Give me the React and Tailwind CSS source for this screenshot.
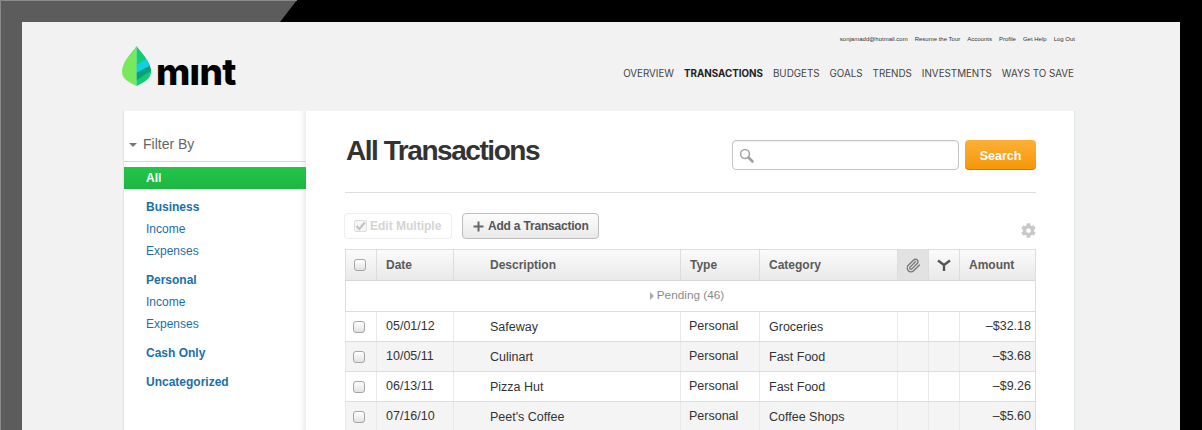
import { FaCog } from "react-icons/fa";

const cols = "grid grid-cols-[31px_77px_227px_79px_138px_31px_31px_77px]";
const rows = [
  ["05/01/12", "Safeway", "Personal", "Groceries", "–$32.18"],
  ["10/05/11", "Culinart", "Personal", "Fast Food", "–$3.68"],
  ["06/13/11", "Pizza Hut", "Personal", "Fast Food", "–$9.26"],
  ["07/16/10", "Peet's Coffee", "Personal", "Coffee Shops", "–$5.60"],
];

function Leaf() {
  const left = "M14.5 0C10.5 6 0 15 0 26C0 33 8 37 14.5 40Z";
  const right = "M14.5 0C18.5 6 29 15 29 26C29 33 21 37 14.5 40Z";
  return (
    <svg width="29" height="40" viewBox="0 0 29 40" className="shrink-0">
      <defs>
        <clipPath id="leaf-right"><path d={right} /></clipPath>
      </defs>
      <path d={left} fill="#78e85c" />
      <g clipPath="url(#leaf-right)">
        <rect x="14" width="16" height="40" fill="#12cb74" />
        <path d="M14.5 19L24 13L29 19L14.5 27Z" fill="#12cfe6" />
        <path d="M14.5 27L29 19L29 25L14.5 34Z" fill="#0aa07c" />
      </g>
    </svg>
  );
}

function Checkbox() {
  return <span className="block w-[12px] h-[12px] rounded-[3px] border border-[#a5a5a5] bg-gradient-to-b from-[#ffffff] to-[#e2e2e2]" />;
}

function SideItem({ children, bold }) {
  return (
    <div className={`h-[22px] pl-[22px] flex items-center text-[12px] text-[#1b6fa8] ${bold ? "font-bold" : ""}`}>
      {children}
    </div>
  );
}

function HeadCell({ children, className = "" }) {
  return <div className={`border-l border-[#dddddd] flex items-center text-[12px] font-bold text-[#5a5a5a] ${className}`}>{children}</div>;
}

function Cell({ children, className = "" }) {
  return <div className={`border-l border-[#e9e9e9] flex items-center text-[12.5px] text-[#333333] ${className}`}>{children}</div>;
}

export default function App() {
  return (
    <div className="relative h-[430px] overflow-hidden bg-black px-[22px] pt-[22px] font-['Liberation_Sans',Arial,sans-serif]">
      <svg className="absolute left-0 top-0" width="300" height="430" viewBox="0 0 300 430">
        <polygon points="0,0 297,0 280,22 22,22 22,430 0,430" fill="#5c5c5c" />
        <polyline points="0.5,430 0.5,0.5 297,0.5" fill="none" stroke="#8a8a8a" />
      </svg>
      <div className="relative h-[408px] overflow-hidden bg-[#f2f2f2] pl-[102px] pr-[106px]">
        <header className="flex h-[89px] justify-between">
          <div className="flex items-start -ml-[2px] pt-[24px]">
            <Leaf />
            <span className="ml-[5px] mt-[7px] font-['Inter',sans-serif] text-[37px] leading-[37px] font-extrabold tracking-[-0.7px] text-black">
              m<span className="inline-block [clip-path:inset(11px_0_0_0)]">i</span>nt
            </span>
          </div>
          <div className="flex flex-col items-end">
            <div className="mt-[13px] -mr-[1px] flex h-[8px] items-center gap-[7px] text-[6px] text-[#333333]">
              <span>sonjamadd@hotmail.com</span>
              <span>Resume the Tour</span>
              <span>Accounts</span>
              <span>Profile</span>
              <span>Get Help</span>
              <span>Log Out</span>
            </div>
            <nav className="mt-[25px] flex h-[12px] items-center gap-[10px] font-['Inter',sans-serif] text-[9.8px] text-[#444444]">
              <span>OVERVIEW</span>
              <span className="font-bold text-[#222222]">TRANSACTIONS</span>
              <span>BUDGETS</span>
              <span>GOALS</span>
              <span>TRENDS</span>
              <span>INVESTMENTS</span>
              <span>WAYS TO SAVE</span>
            </nav>
          </div>
        </header>

        <div className="flex h-[319px] bg-white shadow-[-1px_0_0_#dfe6e6,1px_0_0_#dfe6e6]">
          <aside className="w-[182px] shrink-0 shadow-[inset_-7px_0_6px_-6px_rgba(0,0,0,0.13)]">
            <div className="flex h-[51px] items-center gap-[6px] border-b border-[#d5d5d5] pl-[5px] pt-[16px] pr-0 text-[14px] text-[#666666]">
              <span className="mt-[2px] h-0 w-0 border-x-[4px] border-t-[4px] border-x-transparent border-t-[#777777]" />
              Filter By
            </div>
            <div className="mt-[5px] flex h-[22px] items-center bg-gradient-to-b from-[#22c647] to-[#1fb544] pl-[22px] text-[12px] font-bold text-white">All</div>
            <div className="mt-[7px] flex flex-col gap-[7px]">
              <div>
                <SideItem bold>Business</SideItem>
                <SideItem>Income</SideItem>
                <SideItem>Expenses</SideItem>
              </div>
              <div>
                <SideItem bold>Personal</SideItem>
                <SideItem>Income</SideItem>
                <SideItem>Expenses</SideItem>
              </div>
              <SideItem bold>Cash Only</SideItem>
              <SideItem bold>Uncategorized</SideItem>
            </div>
          </aside>

          <main className="flex-1 pl-[39px] pr-[38px]">
            <div className="flex h-[82px] items-start justify-between border-b border-[#dddddd] pt-[29px]">
              <h1 className="-mt-[5px] ml-[1px] text-[28px] leading-[32px] font-bold tracking-[-1.45px] text-[#333333]">All Transactions</h1>
              <div className="flex gap-[6px]">
                <div className="flex h-[30px] w-[227px] items-center rounded-[4px] border border-[#c4c4c4] bg-white pl-[6px] shadow-[inset_0_1px_1px_rgba(0,0,0,0.06)]">
                  <svg width="15" height="15" viewBox="0 0 15 15" fill="none" stroke="#a2a2a2">
                    <circle cx="6" cy="6" r="4.4" strokeWidth="1.5" />
                    <path d="M9.5 9.5L13.5 13.5" strokeWidth="2.6" strokeLinecap="round" />
                  </svg>
                </div>
                <button className="h-[30px] w-[71px] rounded-[4px] border-b border-[#c97a00] bg-gradient-to-b from-[#fbb034] to-[#f79700] pt-[3px] text-[12.5px] font-bold text-white">Search</button>
              </div>
            </div>

            <div className="mb-[10px] mt-[20px] flex h-[26px] items-stretch">
              <button className="-ml-[1px] flex w-[108px] items-center gap-[3px] rounded-[4px] border border-[#eeeeee] pl-[9px] text-[12px] font-bold text-[#d4d4d4]">
                <span className="flex h-[12px] w-[13px] items-center justify-center rounded-[2px] border border-[#dddddd] bg-[#f6f6f6]">
                  <svg width="11" height="10" viewBox="0 0 11 10" fill="none" stroke="#c4c4c4" strokeWidth="2.2"><path d="M1.5 5L4.2 8L9.8 1.5" /></svg>
                </span>
                Edit Multiple
              </button>
              <button className="ml-[10px] flex w-[137px] items-center gap-[4px] rounded-[4px] border border-[#bdbdbd] bg-gradient-to-b from-[#fdfdfd] to-[#e9e9e9] pl-[10px] text-[12px] font-bold tracking-[-0.2px] text-[#555555]">
                <svg width="11" height="11" viewBox="0 0 11 11" stroke="#666666" strokeWidth="2"><path d="M5.5 0.5V10.5M0.5 5.5H10.5" /></svg>
                Add a Transaction
              </button>
              <FaCog className="ml-auto mt-[10px] text-[15px] text-[#c8c8c8]" />
            </div>

            <div className="w-[691px] border-r border-t border-[#dddddd]">
              <div className={`${cols} h-[31px] border-b border-[#d6d6d6] bg-gradient-to-b from-[#fbfbfb] to-[#e9e9e9]`}>
                <HeadCell className="pl-[8px]"><Checkbox /></HeadCell>
                <HeadCell className="pl-[9px]">Date</HeadCell>
                <HeadCell className="pl-[36px]">Description</HeadCell>
                <HeadCell className="pl-[9px]">Type</HeadCell>
                <HeadCell className="pl-[9px]">Category</HeadCell>
                <HeadCell className="justify-center bg-[#e2e2e2]">
                  <svg width="15" height="15" viewBox="0 0 24 24" fill="none" stroke="#777777" strokeWidth="2.2" strokeLinecap="round" strokeLinejoin="round">
                    <path d="m21.44 11.05-9.19 9.19a6 6 0 0 1-8.49-8.49l8.57-8.57A4 4 0 1 1 18 8.84l-8.59 8.57a2 2 0 0 1-2.83-2.83l8.49-8.48" />
                  </svg>
                </HeadCell>
                <HeadCell className="justify-center">
                  <svg width="14" height="12" viewBox="0 0 14 12" fill="none" stroke="#555555" strokeWidth="2.4">
                    <path d="M1 1.5L7 6L13 1.5M7 6V12" />
                  </svg>
                </HeadCell>
                <HeadCell className="pl-[9px]">Amount</HeadCell>
              </div>
              <div className="flex h-[31px] items-center justify-center gap-[3px] border-b border-l border-[#dddddd] pr-[7px] text-[11.8px] text-[#8a8a8a]">
                <span className="h-0 w-0 border-y-[4px] border-l-[4px] border-y-transparent border-l-[#aaaaaa]" />
                Pending (46)
              </div>
              {rows.map((r, i) => (
                <div key={r[0]} className={`${cols} h-[30px] border-b border-[#dddddd] ${i % 2 ? "bg-[#f4f4f4]" : "bg-white"}`}>
                  <Cell className="border-[#dddddd] pl-[7px]"><Checkbox /></Cell>
                  <Cell className="pl-[9px]">{r[0]}</Cell>
                  <Cell className="pl-[36px] pt-[1px]">{r[1]}</Cell>
                  <Cell className="pl-[8px]">{r[2]}</Cell>
                  <Cell className="pl-[9px] pt-[1px]">{r[3]}</Cell>
                  <Cell />
                  <Cell />
                  <Cell className="justify-end pb-[1px] pr-[5px]">{r[4]}</Cell>
                </div>
              ))}
            </div>
          </main>
        </div>
      </div>
    </div>
  );
}
